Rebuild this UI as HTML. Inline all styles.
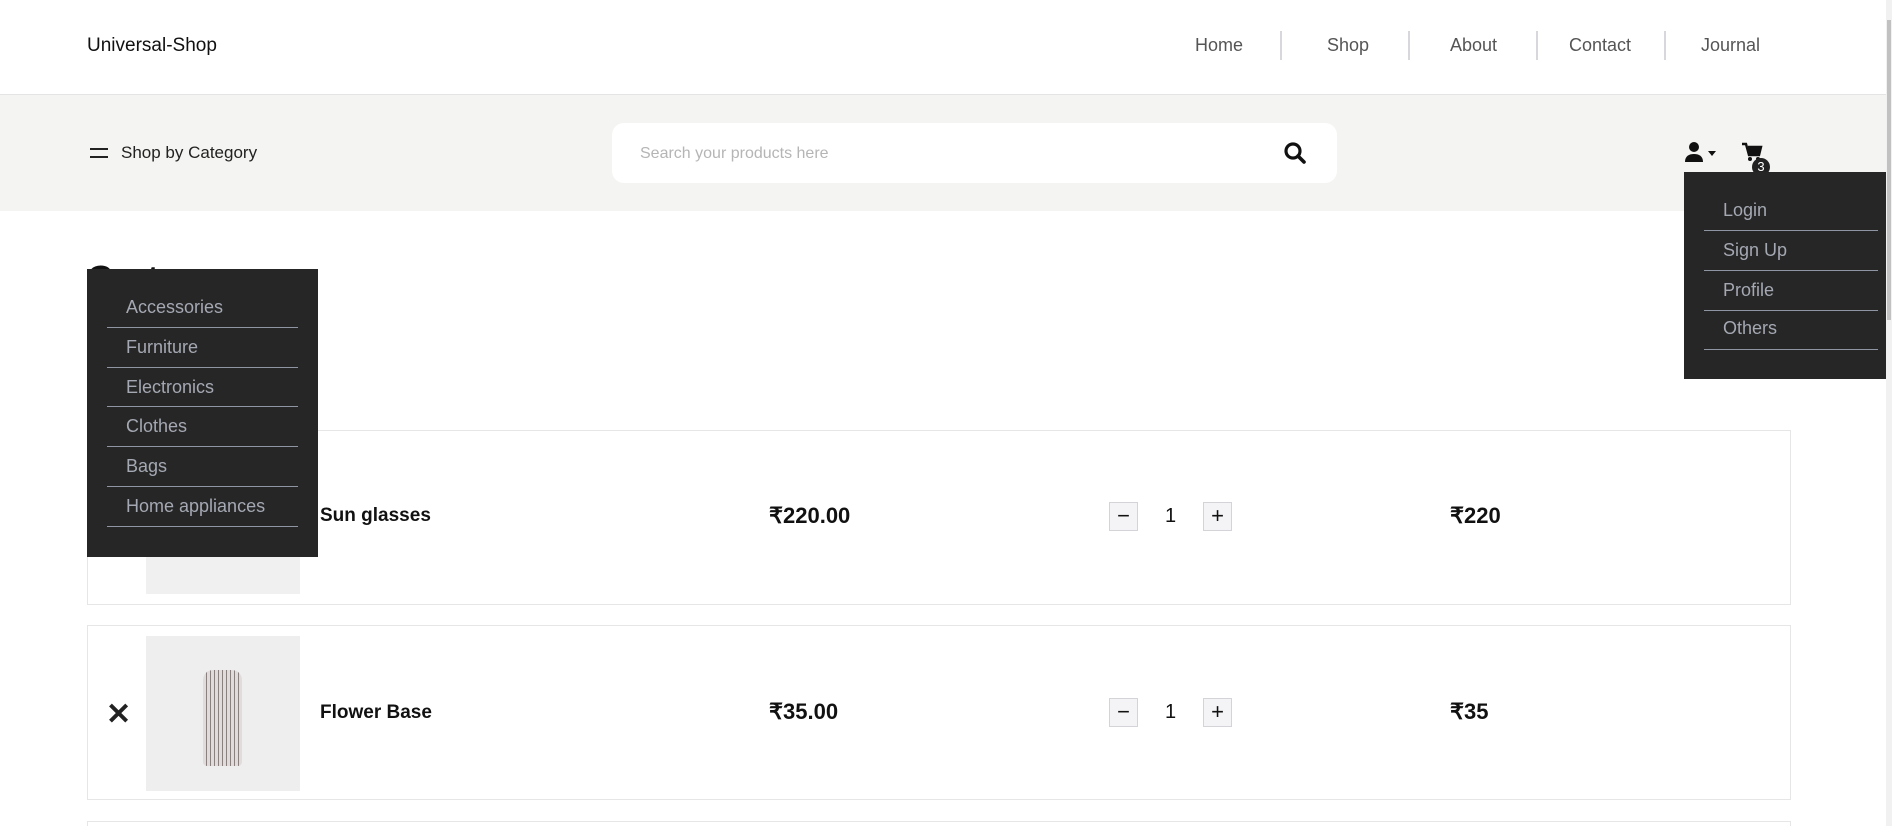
<!DOCTYPE html>
<html><head><meta charset="utf-8"><style>
*{margin:0;padding:0;box-sizing:border-box}
html,body{width:1892px;height:826px;overflow:hidden;background:#fff}
#w{position:relative;width:1892px;height:826px;overflow:hidden;font-family:"Liberation Sans",sans-serif}
.a{position:absolute}
.nav{font-size:18px;color:#555;top:35px}
.sep{width:2px;height:29px;background:#d8d8dc;top:31px}
.dd{background:#262626}
.dd div{position:absolute;color:#a4a8b2;font-size:18px}
.dd i{position:absolute;height:1px;background:#8f95a3}
.row{border:1px solid #e6e6e6;left:87px;width:1704px;height:175px}
.img{background:#f0f0f0;width:154px;height:155px}
.nm{font-weight:bold;font-size:19px;color:#111}
.pr{font-weight:bold;font-size:22px;color:#111}
.q{width:29px;height:29px;border:1px solid #d3d3d8;background:#f4f4f6;text-align:center;font-size:22px;line-height:26px;color:#111}
</style></head><body><div id="w">
<div class="a" style="left:87px;top:35px;font-size:19px;color:#111">Universal-Shop</div>
<div class="a nav" style="left:1195px">Home</div>
<div class="a sep" style="left:1280px"></div>
<div class="a nav" style="left:1327px">Shop</div>
<div class="a sep" style="left:1408px"></div>
<div class="a nav" style="left:1450px">About</div>
<div class="a sep" style="left:1536px"></div>
<div class="a nav" style="left:1569px">Contact</div>
<div class="a sep" style="left:1664px"></div>
<div class="a nav" style="left:1701px">Journal</div>
<div class="a" style="left:0;top:94px;width:1886px;height:1px;background:#e4e4e4"></div>
<div class="a" style="left:0;top:95px;width:1886px;height:116px;background:#f4f4f2"></div>
<div class="a" style="left:90px;top:148px;width:18px;height:2px;background:#222"></div>
<div class="a" style="left:90px;top:156px;width:18px;height:2px;background:#222"></div>
<div class="a" style="left:121px;top:143px;font-size:17px;color:#222">Shop by Category</div>
<div class="a" style="left:612px;top:123px;width:725px;height:60px;background:#fff;border-radius:12px"></div>
<div class="a" style="left:640px;top:145px;font-size:16px;color:#b5b5b5">Search your products here</div>
<svg class="a" style="left:1283px;top:141px" width="24" height="24" viewBox="0 0 24 24"><circle cx="10" cy="10" r="7" fill="none" stroke="#111" stroke-width="3.2"/><path d="M15 15l6 6" stroke="#111" stroke-width="3.6" stroke-linecap="round"/></svg>
<svg class="a" style="left:1685px;top:142px" width="36" height="22" viewBox="0 0 36 22"><circle cx="9" cy="5" r="5" fill="#111"/><path d="M0 20c0-6 4-8 9-8s9 2 9 8z" fill="#111"/><path d="M23 9h8l-4 5z" fill="#111"/></svg>
<svg class="a" style="left:1741px;top:142px" width="22" height="20" viewBox="0 0 22 20"><path d="M1 2h4l3 11h10l2-8H7" fill="none" stroke="#111" stroke-width="2.4"/><path d="M7 5h13l-2 8H8z" fill="#111"/><circle cx="9" cy="17" r="2" fill="#111"/><circle cx="17" cy="17" r="2" fill="#111"/></svg>
<div class="a" style="left:1752px;top:158px;width:18px;height:18px;border-radius:9px;background:#222;color:#fff;font-size:13px;text-align:center;line-height:18px">3</div>
<div class="a" style="left:87px;top:258px;font-size:36px;font-weight:bold;color:#111">Cart</div>
<div class="a row" style="top:430px"></div>
<div class="a img" style="left:146px;top:439px"></div>
<div class="a nm" style="left:320px;top:505px">Sun glasses</div>
<div class="a pr" style="left:769px;top:503px">₹220.00</div>
<div class="a q" style="left:1109px;top:502px">−</div>
<div class="a" style="left:1165px;top:505px;font-size:20px;color:#111">1</div>
<div class="a q" style="left:1203px;top:502px">+</div>
<div class="a pr" style="left:1450px;top:503px">₹220</div>
<div class="a row" style="top:625px"></div>
<div class="a" style="left:106px;top:697px;font-size:30px;font-weight:bold;color:#222">✕</div>
<div class="a img" style="left:146px;top:636px;background:#eeeeee"></div>
<div class="a" style="left:203px;top:670px;width:39px;height:96px;border-radius:10px 10px 4px 4px;background:repeating-linear-gradient(90deg,#e0dcdc 0 3px,#8a8080 3px 4px)"></div>
<div class="a nm" style="left:320px;top:702px">Flower Base</div>
<div class="a pr" style="left:769px;top:699px">₹35.00</div>
<div class="a q" style="left:1109px;top:698px">−</div>
<div class="a" style="left:1165px;top:701px;font-size:20px;color:#111">1</div>
<div class="a q" style="left:1203px;top:698px">+</div>
<div class="a pr" style="left:1450px;top:699px">₹35</div>
<div class="a" style="left:87px;top:821px;width:1704px;height:5px;border:1px solid #e6e6e6;border-bottom:none"></div>
<div class="a dd" style="left:87px;top:269px;width:231px;height:288px">
<div style="left:39px;top:28px">Accessories</div><i style="left:20px;top:58px;width:191px"></i>
<div style="left:39px;top:68px">Furniture</div><i style="left:20px;top:98px;width:191px"></i>
<div style="left:39px;top:108px">Electronics</div><i style="left:20px;top:137px;width:191px"></i>
<div style="left:39px;top:147px">Clothes</div><i style="left:20px;top:177px;width:191px"></i>
<div style="left:39px;top:187px">Bags</div><i style="left:20px;top:217px;width:191px"></i>
<div style="left:39px;top:227px">Home appliances</div><i style="left:20px;top:257px;width:191px"></i>
</div>
<div class="a dd" style="left:1684px;top:172px;width:202px;height:207px">
<div style="left:39px;top:28px">Login</div><i style="left:20px;top:58px;width:174px"></i>
<div style="left:39px;top:68px">Sign Up</div><i style="left:20px;top:98px;width:174px"></i>
<div style="left:39px;top:108px">Profile</div><i style="left:20px;top:138px;width:174px"></i>
<div style="left:39px;top:146px">Others</div><i style="left:20px;top:177px;width:174px"></i>
</div>
<div class="a" style="left:1886px;top:0;width:6px;height:826px;background:#f1f1f1"></div>
<div class="a" style="left:1887px;top:20px;width:4px;height:300px;background:#c1c1c1"></div>
</div></body></html>
